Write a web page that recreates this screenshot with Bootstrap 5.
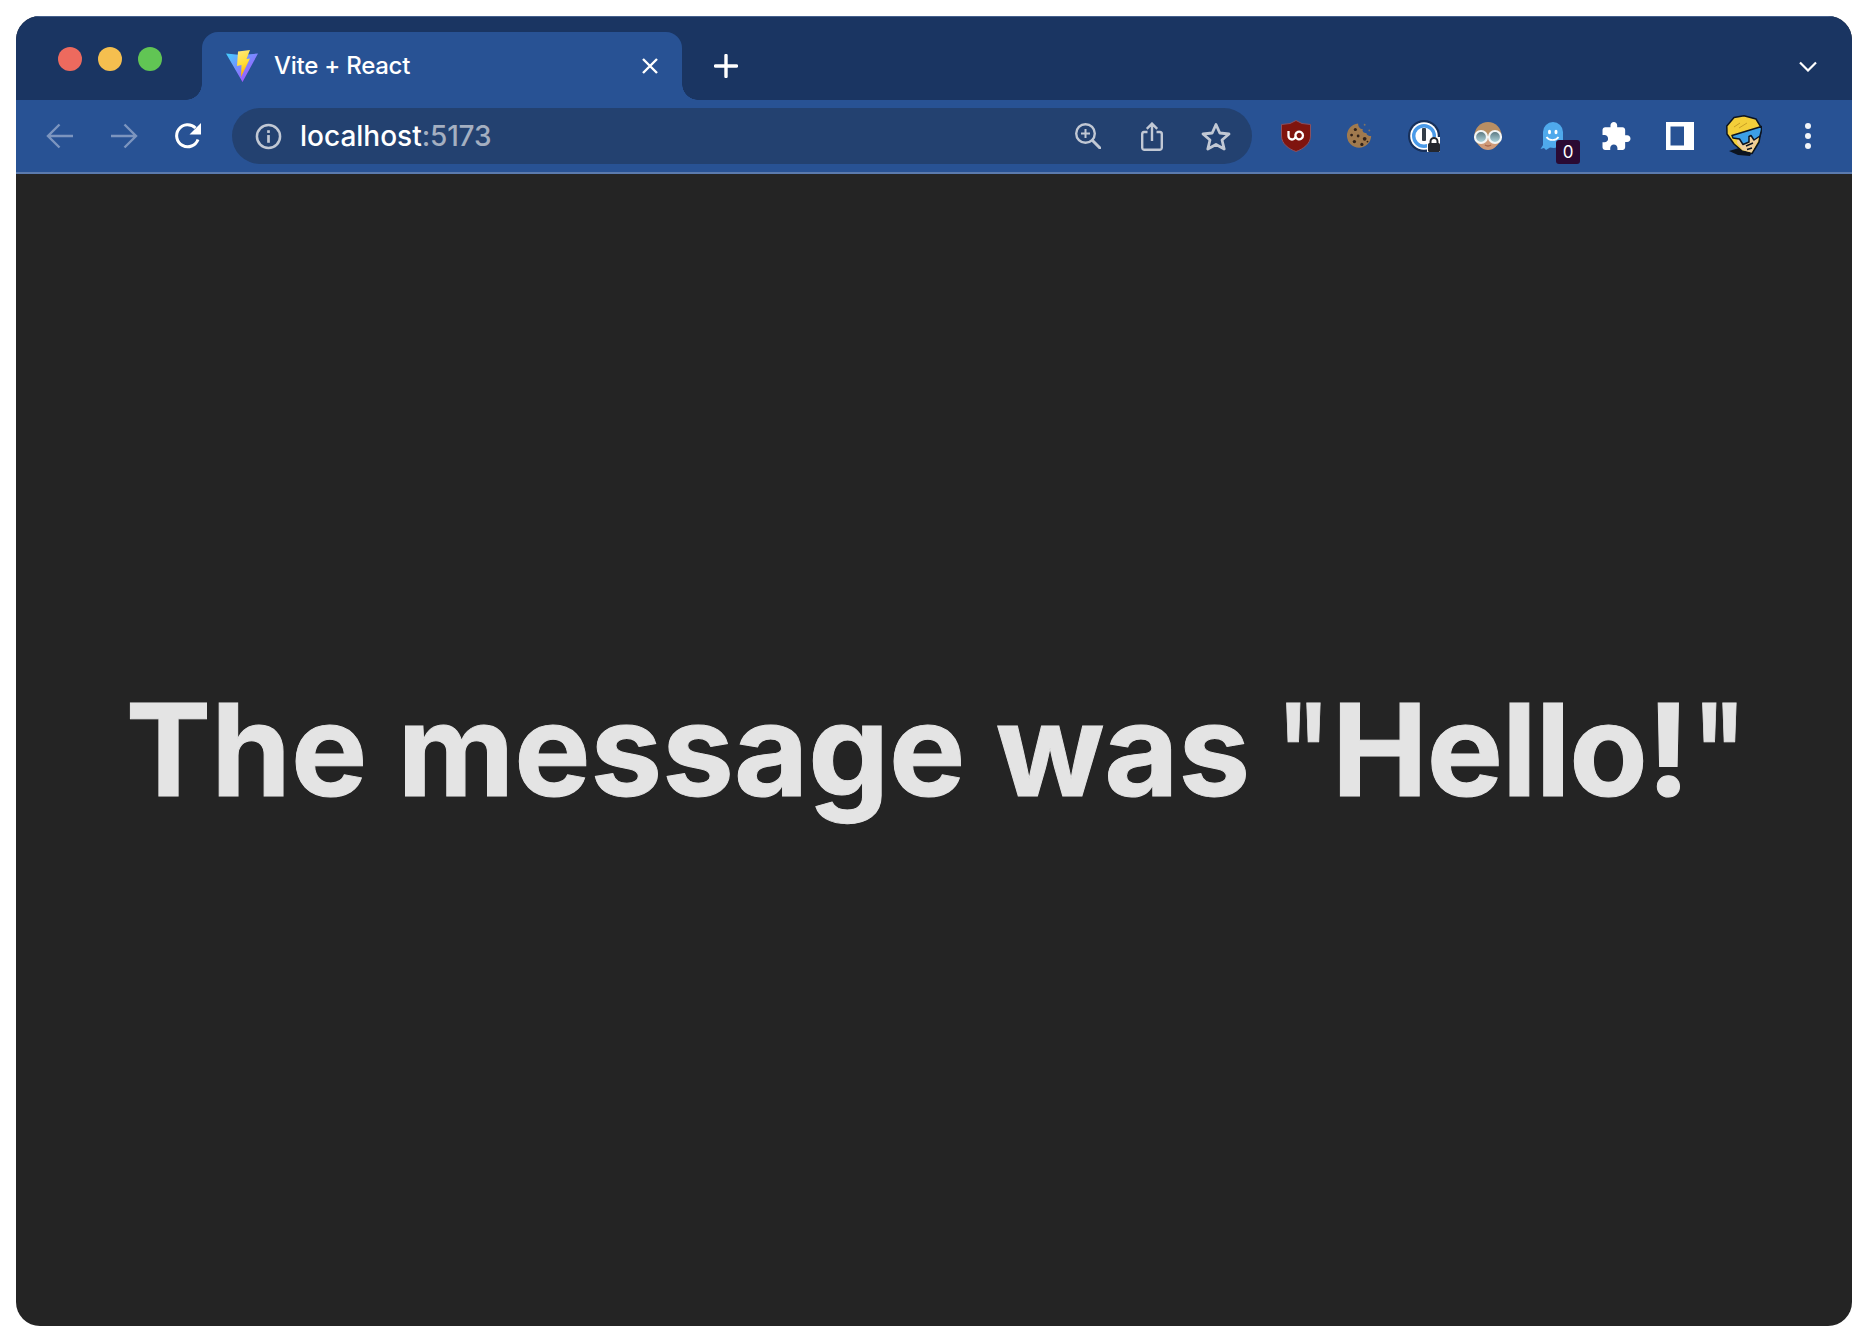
<!DOCTYPE html>
<html lang="en">
<head>
<meta charset="utf-8">
<title>Vite + React</title>
<link href="https://cdn.jsdelivr.net/npm/bootstrap@5.3.0/dist/css/bootstrap.min.css" rel="stylesheet">
<style>
html, body { height: 100%; }
body { background: #fff; font-family: "Inter", "Liberation Sans", sans-serif; padding: 16px; }
.win { height: 1310px; width: 1836px; border-radius: 24px; overflow: hidden; background: #242424; }
.strip { height: 84px; background: #1a3562; padding-top: 16px; box-shadow: inset 0 1px 0 #45608c; }
.lights { width: 186px; padding: 15px 0 0 42px; gap: 16px; }
.light { width: 24px; height: 24px; border-radius: 50%; }
.tab-active { width: 480px; height: 68px; background: #285294; border-radius: 16px 16px 0 0; position: relative; padding: 0 24px 0 24px; color: #fff; }
.tab-active::before, .tab-active::after { content: ""; position: absolute; bottom: 0; width: 16px; height: 16px; background: radial-gradient(circle at var(--cx) 0, #1a3562 15.5px, #285294 16px); }
.tab-active::before { left: -16px; --cx: 0; }
.tab-active::after { right: -16px; --cx: 16px; }
.tab-title { margin-left: 16px; font-size: 24px; line-height: 1; font-weight: 500; letter-spacing: -.25px; }
.tool { height: 72px; background: #285294; padding: 8px 0; }
.tool-line { height: 2px; background: #5b7aad; }
.nav-b { width: 64px; height: 56px; }
.omni { width: 1020px; height: 56px; background: #234170; border-radius: 28px; padding-left: 23px; color: #fff; font-size: 28px; margin-left: 12px; }
.host { margin-left: 18px; line-height: 1; font-weight: 500; }
.port { color: #a4afc1; letter-spacing: -.2px; }
.ext { width: 64px; height: 56px; position: relative; }
.count { position: absolute; left: 36px; top: 32px; width: 24px; height: 24px; border-radius: 3px; background: #2a0a33; color: #fff; font-size: 17px; line-height: 25px; text-align: center; }
.page-main { height: 1152px; }
.msg { color: #e4e4e4; font-size: 128px; font-weight: 700; line-height: 1.1; margin: 0; padding-left: 6px; white-space: nowrap; -webkit-text-stroke: 1px #e4e4e4; }
.qmark { display: inline-block; transform: scaleX(.74); margin-right: -6.500px; }
.q-open { margin-left: -12.500px; }
.q-close { margin-left: -5px; }
.greet { letter-spacing: -1px; }
</style>
</head>
<body>
<div class="win d-flex flex-column">
  <div class="strip d-flex">
    <div class="lights d-flex align-items-start">
      <div class="light" style="background:#ed6a5e"></div>
      <div class="light" style="background:#f5bf4f"></div>
      <div class="light" style="background:#61c554"></div>
    </div>
    <div class="tab-active d-flex align-items-center">
      <svg width="32" height="32" viewBox="0 0 32 32"><defs><linearGradient id="va" x1="0" y1="0" x2="1" y2="1"><stop offset="0" stop-color="#41d1ff"/><stop offset="1" stop-color="#bd34fe"/></linearGradient><linearGradient id="vb" x1="0" y1="0" x2="0.3" y2="1"><stop offset="0" stop-color="#ffea83"/><stop offset=".6" stop-color="#ffdd35"/><stop offset="1" stop-color="#ffa800"/></linearGradient></defs><path d="M0 3.500 L15 5 L32 3.500 L16.500 32 Z" fill="url(#va)"/><path d="M12 1.500 L24 0 L20.500 9 L24 8.500 L15 27 L15.500 15 L11 16 Z" fill="url(#vb)"/></svg>
      <span class="tab-title">Vite + React</span>
      <svg class="ms-auto" width="16" height="16" viewBox="0 0 16 16"><path d="M1 1 L15 15 M15 1 L1 15" stroke="#fff" stroke-width="2.400" fill="none"/></svg>
    </div>
    <div class="d-flex align-items-center" style="margin:0 0 0 32px;height:68px"><svg width="24" height="24" viewBox="0 0 24 24"><path d="M12 1.500 V22.500 M1.500 12 H22.500" stroke="#fff" stroke-width="3.400" stroke-linecap="round"/></svg></div>
    <div class="ms-auto d-flex align-items-center" style="height:68px;padding-right:35px"><svg width="18" height="11" viewBox="0 0 18 11"><path d="M1 1.500 L9 9.500 L17 1.500" stroke="#fff" stroke-width="2.200" fill="none"/></svg></div>
  </div>
  <div class="tool d-flex align-items-center">
    <div class="nav-b d-flex align-items-center justify-content-center" style="margin-left:12px"><svg width="28" height="26" viewBox="0 0 28 26"><path d="M27 13 H2 M13.500 1.500 L2 13 L13.500 24.500" stroke="#7c95bf" stroke-width="2.400" fill="none"/></svg></div>
    <div class="nav-b d-flex align-items-center justify-content-center"><svg width="28" height="26" viewBox="0 0 28 26"><path d="M1 13 H26 M14.500 1.500 L26 13 L14.500 24.500" stroke="#7c95bf" stroke-width="2.400" fill="none"/></svg></div>
    <div class="nav-b d-flex align-items-center justify-content-center"><svg width="28" height="28" viewBox="0 0 28 28"><path d="M24 17.500 A11 11 0 1 1 21.500 6" stroke="#fff" stroke-width="3" fill="none"/><path d="M27 1 V12.500 H15.500 Z" fill="#fff"/></svg></div>
    <div class="omni d-flex align-items-center">
      <svg width="27" height="27" viewBox="0 0 28 28"><circle cx="14" cy="14" r="12" stroke="#c1c8d4" stroke-width="2.600" fill="none"/><rect x="12.600" y="12.500" width="2.800" height="8" fill="#c1c8d4"/><rect x="12.600" y="7.500" width="2.800" height="2.800" fill="#c1c8d4"/></svg>
      <span class="host">localhost<span class="port">:5173</span></span>
      <div class="ms-auto d-flex align-items-center">
        <div class="ext d-flex align-items-center justify-content-center"><svg width="26" height="26" viewBox="0 0 26 26"><circle cx="10.500" cy="10.500" r="9.300" stroke="#c1c8d4" stroke-width="2.400" fill="none"/><path d="M17.500 17.500 L25 25" stroke="#c1c8d4" stroke-width="3" stroke-linecap="round"/><path d="M10.500 6 V15 M6 10.500 H15" stroke="#c1c8d4" stroke-width="2"/></svg></div>
        <div class="ext d-flex align-items-center justify-content-center"><svg width="22" height="29" viewBox="0 0 22 29"><path d="M6.500 10 H3 A2 2 0 0 0 1.200 12 V26 A2 2 0 0 0 3 27.800 H19 A2 2 0 0 0 20.800 26 V12 A2 2 0 0 0 19 10 H15.500 M11 19 V2 M5.800 6.800 L11 1.600 L16.200 6.800" stroke="#c1c8d4" stroke-width="2.400" fill="none"/></svg></div>
        <div class="ext d-flex align-items-center justify-content-center" style="margin-right:4px"><svg width="30" height="29" viewBox="0 0 30 29"><path d="M15 2.500 L18.800 11 L28 12 L21 18 L23.200 27 L15 22.500 L6.800 27 L9 18 L2 12 L11.200 11 Z" stroke="#c1c8d4" stroke-width="2.800" fill="none" stroke-linejoin="round"/></svg></div>
      </div>
    </div>
    <div class="d-flex align-items-center" style="margin-left:12px">
      <div class="ext d-flex align-items-center justify-content-center"><svg width="30" height="32" viewBox="0 0 30 32"><path d="M15 0.500 L21 3.500 L29.500 4.500 V16 C29.500 24 22 29 15 31.500 C8 29 0.500 24 0.500 16 V4.500 L9 3.500 Z" fill="#7f140e" stroke="#8a5060" stroke-width="1"/><path d="M7.500 11 V16 A3.500 3.500 0 0 0 14.500 16 V14.500 A3.800 3.800 0 1 1 14.500 16.500" stroke="#fff" stroke-width="2.300" fill="none"/></svg></div>
      <div class="ext d-flex align-items-center justify-content-center"><svg width="28" height="28" viewBox="0 0 30 30"><path d="M13 1.500 A13 13 0 1 0 27 15 C24 15 22 14 22 12 C19 12 17 10 18 7.500 C15 7.500 13 5 13 1.500 Z" fill="#a07a4e"/><g fill="#2f2119"><circle cx="10" cy="8" r="1.700"/><circle cx="6" cy="14" r="1.500"/><circle cx="13" cy="15" r="1.500"/><circle cx="20" cy="18" r="2"/><circle cx="9" cy="21" r="1.800"/><circle cx="17" cy="24" r="1.700"/><circle cx="23" cy="21" r="1"/></g><circle cx="20" cy="3" r="1" fill="#7f7464"/><circle cx="25" cy="9" r="1" fill="#7f7464"/></svg></div>
      <div class="ext d-flex align-items-center justify-content-center"><svg width="32" height="32" viewBox="0 0 32 32"><circle cx="16" cy="16" r="16" fill="#17305a"/><circle cx="16" cy="16" r="13.800" fill="#fff"/><circle cx="16" cy="16" r="10.300" stroke="#4a9ae8" stroke-width="3.400" fill="#fff"/><rect x="14" y="8" width="4" height="13" rx="1" fill="#343d48"/><rect x="19" y="17" width="13" height="15" fill="#fff"/><rect x="20" y="23" width="12" height="9" rx="1.500" fill="#24272e"/><path d="M22.500 24 V21.500 A3.500 3.500 0 0 1 29.500 21.500 V24" stroke="#24272e" stroke-width="2" fill="none"/></svg></div>
      <div class="ext d-flex align-items-center justify-content-center"><svg width="32" height="32" viewBox="0 0 32 32"><defs><linearGradient id="lens" x1="0" y1="0" x2="0" y2="1"><stop offset="0" stop-color="#55727c"/><stop offset="1" stop-color="#b5dbe3"/></linearGradient></defs><circle cx="16" cy="15.500" r="13.500" fill="#b98f63"/><path d="M5 18 H27 C26 26 22 30 16 30 C10 30 6 26 5 18 Z" fill="#cf9a79"/><path d="M13 25 Q16 27 19 25" stroke="#a8674d" stroke-width="1.500" fill="none"/><circle cx="9" cy="17" r="6" fill="url(#lens)" stroke="#f2f5f6" stroke-width="2.200"/><circle cx="23" cy="17" r="6" fill="url(#lens)" stroke="#f2f5f6" stroke-width="2.200"/></svg></div>
      <div class="ext d-flex align-items-center justify-content-center"><svg width="24" height="30" viewBox="0 0 24 30"><path d="M0.500 28 L3 24 L3 11 A10 10 0 0 1 23 11 V25 L14 27 L10 26.500 L6 29 L4 27 Z" fill="#4fa9ec"/><ellipse cx="9.500" cy="11" rx="1.500" ry="2.300" fill="#fff"/><ellipse cx="16" cy="11" rx="1.500" ry="2.300" fill="#fff"/><path d="M6.500 16 C9 20 16 20 18.500 16" stroke="#fff" stroke-width="1.700" fill="none"/></svg><span class="count">0</span></div>
      <div class="ext d-flex align-items-center justify-content-center"><svg width="29" height="28" viewBox="2 1 21 21"><path d="M20.500 11H19V7c0-1.100-.9-2-2-2h-4V3.500C13 2.120 11.880 1 10.500 1S8 2.120 8 3.500V5H4c-1.100 0-1.990.9-1.990 2v3.800H3.500c1.490 0 2.700 1.210 2.700 2.700s-1.210 2.700-2.700 2.700H2V20c0 1.100.9 2 2 2h3.800v-1.500c0-1.490 1.210-2.700 2.700-2.700 1.490 0 2.700 1.210 2.700 2.700V22H17c1.100 0 2-.9 2-2v-4h1.500c1.380 0 2.500-1.120 2.500-2.500S21.880 11 20.500 11z" fill="#fff"/></svg></div>
      <div class="ext d-flex align-items-center justify-content-center"><svg width="28" height="28" viewBox="0 0 28 28"><path d="M0 0 H28 V28 H0 Z M4.500 4.500 V23.500 H18 V4.500 Z" fill="#fff" fill-rule="evenodd"/></svg></div>
      <div class="ext d-flex align-items-center justify-content-center"><svg width="36" height="42" viewBox="0 0 36 42"><path d="M3 36 L13 33 L26 37 L24 41 L12 40 Z" fill="#0c1420"/><path d="M18 0.800 L30 4 L35.500 13 L33 27 L26 38.500 L16 36 L8 29 L1 19 L0.800 11 L8 2.500 Z" fill="#f3cf3a" stroke="#0c1420" stroke-width="1.500" stroke-linejoin="round"/><path d="M12 19 L33 12 L32 26 L25.500 37.500 L16.500 35 L11 28 Z" fill="#efcf9b"/><path d="M6 20.500 L35.500 11.500 L35.500 15 L34 21 L28 25 L25 20.500 L23 21.500 L23 27 L17 29.500 L13.500 24 L7 23 Z" fill="#3c9fe6" stroke="#0c1420" stroke-width="1.500" stroke-linejoin="round"/><path d="M8 12 L14 8 M13 13 L21 8" stroke="#c99f24" stroke-width="1"/><path d="M20 31 L27 28 M21 34.500 L26 33" stroke="#0c1420" stroke-width="1.400"/></svg></div>
      <div class="ext d-flex align-items-center justify-content-center"><svg width="8" height="26" viewBox="0 0 8 26"><circle cx="4" cy="3" r="3" fill="#f2f4f8"/><circle cx="4" cy="13" r="3" fill="#f2f4f8"/><circle cx="4" cy="23" r="3" fill="#f2f4f8"/></svg></div>
    </div>
  </div>
  <div class="tool-line"></div>
  <main class="page-main d-flex align-items-center justify-content-center">
    <h1 class="msg">The message was <span class="qmark q-open">"</span><span class="greet">Hello!</span><span class="qmark q-close">"</span></h1>
  </main>
</div>
</body>
</html>
